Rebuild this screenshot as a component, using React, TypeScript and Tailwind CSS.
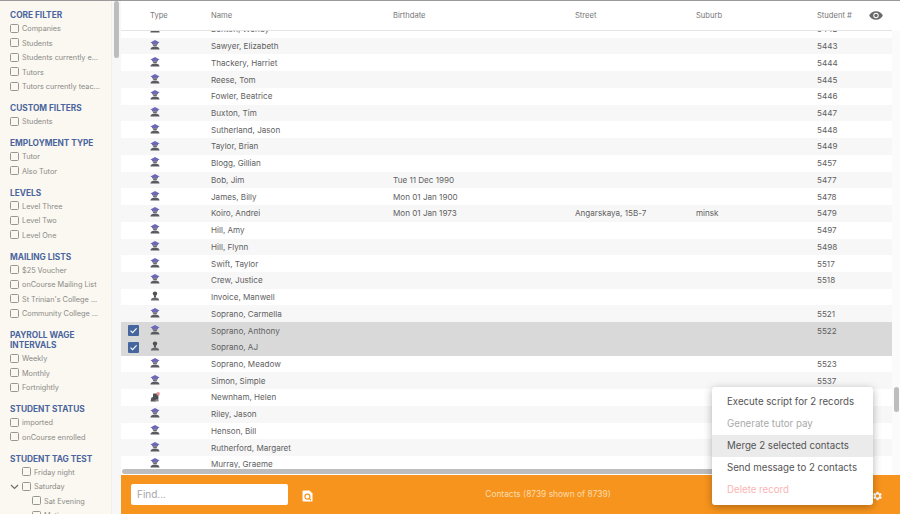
import React from "react";

type Group = { title: string[]; items: { label: string; indent?: number; chevron?: boolean }[] };

const groups: Group[] = [
  { title: ["CORE FILTER"], items: [{ label: "Companies" }, { label: "Students" }, { label: "Students currently e..." }, { label: "Tutors" }, { label: "Tutors currently teac..." }] },
  { title: ["CUSTOM FILTERS"], items: [{ label: "Students" }] },
  { title: ["EMPLOYMENT TYPE"], items: [{ label: "Tutor" }, { label: "Also Tutor" }] },
  { title: ["LEVELS"], items: [{ label: "Level Three" }, { label: "Level Two" }, { label: "Level One" }] },
  { title: ["MAILING LISTS"], items: [{ label: "$25 Voucher" }, { label: "onCourse Mailing List" }, { label: "St Trinian's College ..." }, { label: "Community College ..." }] },
  { title: ["PAYROLL WAGE", "INTERVALS"], items: [{ label: "Weekly" }, { label: "Monthly" }, { label: "Fortnightly" }] },
  { title: ["STUDENT STATUS"], items: [{ label: "imported" }, { label: "onCourse enrolled" }] },
  { title: ["STUDENT TAG TEST"], items: [{ label: "Friday night", indent: 1 }, { label: "Saturday", indent: 1, chevron: true }, { label: "Sat Evening", indent: 2 }, { label: "Matinee", indent: 2 }] },
];

type Row = { name: string; no?: string; birth?: string; street?: string; suburb?: string; kind?: "s" | "t" | "c"; sel?: boolean };
const rows: Row[] = [
  { name: "Benton, Wendy", no: "5442" },
  { name: "Sawyer, Elizabeth", no: "5443" },
  { name: "Thackery, Harriet", no: "5444" },
  { name: "Reese, Tom", no: "5445" },
  { name: "Fowler, Beatrice", no: "5446" },
  { name: "Buxton, Tim", no: "5447" },
  { name: "Sutherland, Jason", no: "5448" },
  { name: "Taylor, Brian", no: "5449" },
  { name: "Blogg, Gillian", no: "5457" },
  { name: "Bob, Jim", no: "5477", birth: "Tue 11 Dec 1990" },
  { name: "James, Billy", no: "5478", birth: "Mon 01 Jan 1900" },
  { name: "Koiro, Andrei", no: "5479", birth: "Mon 01 Jan 1973", street: "Angarskaya, 15B-7", suburb: "minsk" },
  { name: "Hill, Amy", no: "5497" },
  { name: "Hill, Flynn", no: "5498" },
  { name: "Swift, Taylor", no: "5517" },
  { name: "Crew, Justice", no: "5518" },
  { name: "Invoice, Manwell", kind: "t" },
  { name: "Soprano, Carmella", no: "5521" },
  { name: "Soprano, Anthony", no: "5522", sel: true },
  { name: "Soprano, AJ", kind: "t", sel: true },
  { name: "Soprano, Meadow", no: "5523" },
  { name: "Simon, Simple", no: "5537" },
  { name: "Newnham, Helen", kind: "c" },
  { name: "Riley, Jason" },
  { name: "Henson, Bill" },
  { name: "Rutherford, Margaret" },
  { name: "Murray, Graeme" },
];

function TypeIcon({ kind = "s" }: { kind?: "s" | "t" | "c" }) {
  if (kind === "c")
    return (
      <svg width="10" height="10" viewBox="0 0 10 10" className="block">
        <path d="M0.6 9.4 L1.2 6.2 Q1.6 5 3 5 L6 5 L6 9.4 Z" fill="#55565a" />
        <rect x="3" y="1.4" width="5.4" height="6.4" rx="0.6" fill="#4d4e53" />
        <rect x="6.6" y="0.3" width="3" height="3" rx="0.5" fill="#e58c93" />
        <rect x="4.6" y="7.8" width="4" height="1.6" fill="#85868a" />
      </svg>
    );
  if (kind === "t")
    return (
      <svg width="10" height="10" viewBox="0 0 10 10" className="block">
        <circle cx="5" cy="2.6" r="2.2" fill="#505155" />
        <rect x="4" y="4.2" width="2" height="2.4" fill="#505155" />
        <path d="M0.8 9.6 Q0.8 7.4 3 6.8 L7 6.8 Q9.2 7.4 9.2 9.6 Z" fill="#68696e" />
      </svg>
    );
  return (
    <svg width="10" height="10" viewBox="0 0 10 10" className="block">
      <path d="M5 0 L9.6 2.4 L8 3.2 L8 4.2 L2 4.2 L2 3.2 L0.4 2.4 Z" fill="#6d68b8" />
      <path d="M2.6 4.2 L7.4 4.2 Q7.2 6.4 5 6.4 Q2.8 6.4 2.6 4.2 Z" fill="#6a6b72" />
      <path d="M0.4 9.6 Q0.4 7.2 3 6.8 L7 6.8 Q9.6 7.2 9.6 9.6 Z" fill="#595a5f" />
    </svg>
  );
}

function Box() {
  return <span className="block w-[7px] h-[7px] box-content shrink-0 rounded-[1.5px] border border-[#97978f]" />;
}

function FilterItem({ label, indent = 0, chevron }: { label: string; indent?: number; chevron?: boolean }) {
  const pad = indent === 2 ? "pl-[32px]" : indent === 1 ? "pl-[22px]" : "pl-[10px]";
  return (
    <div className={`relative flex items-center h-[14.5px] ${pad} gap-[3px]`}>
      {chevron && (
        <svg width="9" height="6" viewBox="0 0 9 6" className="absolute left-[10px] top-[5px]">
          <path d="M1 1 L4.5 4.5 L8 1" fill="none" stroke="#6d6d6a" strokeWidth="1.2" />
        </svg>
      )}
      <Box />
      <span className="text-[7.3px] leading-[9px] pt-[1px] text-[#8a8a86] whitespace-nowrap">{label}</span>
    </div>
  );
}

function Sidebar() {
  return (
    <aside className="w-[111px] shrink-0 bg-[#fbf8f1] overflow-hidden pt-[4px]">
      {groups.map((g, i) => (
        <section key={i} className="pt-[5px] pb-[4.5px]">
          <h3 className="pl-[10px] mb-[1px] text-[8.3px] leading-[10px] font-bold text-[#4a659d] whitespace-nowrap">
            {g.title.map((t) => (
              <div key={t}>{t}</div>
            ))}
          </h3>
          {g.items.map((it) => (
            <FilterItem key={it.label} {...it} />
          ))}
        </section>
      ))}
    </aside>
  );
}

const cols = "grid grid-cols-[30px_60px_182px_182px_121px_121px_1fr] items-center";

function Table() {
  return (
    <div className="flex-1 min-h-0 flex flex-col bg-white">
      <div className={`${cols} h-[30px] shrink-0 border-b border-[#e3e3e3] text-[7.6px] text-[#777] pt-[1px] mr-[8px]`}>
        <span />
        <span className="-ml-[1px]">Type</span>
        <span>Name</span>
        <span>Birthdate</span>
        <span>Street</span>
        <span>Suburb</span>
        <span className="flex items-center justify-between pr-[9px]">
          Student #
          <svg width="14" height="9" viewBox="0 0 14 9">
            <path d="M7 0.2 C3.8 0.2 1.2 2 0.2 4.5 C1.2 7 3.8 8.8 7 8.8 C10.2 8.8 12.8 7 13.8 4.5 C12.8 2 10.2 0.2 7 0.2 Z" fill="#6a6a6a" />
            <circle cx="7" cy="4.5" r="2.7" fill="#fff" />
            <circle cx="7" cy="4.5" r="1.7" fill="#6a6a6a" />
          </svg>
        </span>
      </div>
      <div className="flex-1 min-h-0 flex">
        <div className="flex-1 min-w-0 overflow-hidden flex flex-col">
          <div className="flex-1 min-h-0 overflow-hidden">
            <div className="-mt-[10px]">
              {rows.map((r, i) => (
                <div
                  key={r.name}
                  className={`${cols} h-[16.74px] text-[8.1px] text-[#5f5f5f] ${r.sel ? "bg-[#d9d9d9]" : i % 2 === 1 ? "bg-[#f7f7f7]" : "bg-white"}`}
                >
                  <span className="pl-[7px]">
                    {r.sel && (
                      <span className="w-[11px] h-[11px] rounded-[1px] bg-[#45659e] flex items-center justify-center">
                        <svg width="9" height="9" viewBox="0 0 9 9">
                          <path d="M1.5 4.6 L3.6 6.7 L7.6 2.3" fill="none" stroke="#fff" strokeWidth="1.1" />
                        </svg>
                      </span>
                    )}
                  </span>
                  <span className="-mt-[2px] -ml-[1px]">
                    <TypeIcon kind={r.kind} />
                  </span>
                  <span>{r.name}</span>
                  <span>{r.birth}</span>
                  <span>{r.street}</span>
                  <span>{r.suburb}</span>
                  <span>{r.no}</span>
                </div>
              ))}
            </div>
          </div>
          <div className="h-[7px] shrink-0 bg-white flex items-center pl-[1px]">
            <div className="h-[5px] w-[650px] rounded-full bg-[#bdbdbd]" />
          </div>
        </div>
        <div className="w-[8px] shrink-0 bg-[#fbfbfb] pt-[356px] pl-[2px]">
          <div className="w-[5px] h-[25px] rounded-full bg-[#bdbdbd]" />
        </div>
      </div>
    </div>
  );
}

function Footer() {
  return (
    <footer className="h-[39px] shrink-0 bg-[#f7941d] flex items-center pl-[10px] pr-[17px]">
      <div className="w-[157px] h-[21px] rounded-[2px] bg-white flex items-center pl-[6px] text-[10px] text-[#a5a5a5]">Find...</div>
      <svg width="11" height="12" viewBox="0 0 11 12" className="ml-[14px] mt-[2px]">
        <path d="M1.5 0.5 L7.5 0.5 L10.5 3.5 L10.5 11.5 L1.5 11.5 Q0.5 11.5 0.5 10.5 L0.5 1.5 Q0.5 0.5 1.5 0.5 Z" fill="#fff" />
        <circle cx="5.4" cy="6.6" r="2.5" fill="none" stroke="#f7941d" strokeWidth="1.2" />
        <path d="M7.2 8.4 L9 10.2" stroke="#f7941d" strokeWidth="1.3" />
      </svg>
      <div className="flex-1 text-center text-[8.4px] text-[#fcdcb0] -ml-[88px]">Contacts (8739 shown of 8739)</div>
      <svg width="12" height="12" viewBox="0 0 24 24" fill="#fff" className="mt-[2px]">
        <path d="M19.4 13a7.7 7.7 0 0 0 0-2l2.1-1.6-2-3.5-2.5 1a7.6 7.6 0 0 0-1.7-1L15 3.3h-4l-.4 2.6a7.6 7.6 0 0 0-1.7 1l-2.5-1-2 3.5L6.6 11a7.7 7.7 0 0 0 0 2l-2.1 1.6 2 3.5 2.5-1a7.6 7.6 0 0 0 1.7 1l.4 2.6h4l.4-2.6a7.6 7.6 0 0 0 1.7-1l2.5 1 2-3.5zM13 15.5a3.5 3.5 0 1 1 0-7 3.5 3.5 0 0 1 0 7z" />
      </svg>
    </footer>
  );
}

function Menu() {
  const items: [string, string][] = [
    ["Execute script for 2 records", "text-[#555]"],
    ["Generate tutor pay", "text-[#aaa]"],
    ["Merge 2 selected contacts", "text-[#555] bg-[#ebebeb]"],
    ["Send message to 2 contacts", "text-[#555]"],
    ["Delete record", "text-[#fbb4b4]"],
  ];
  return (
    <div className="absolute left-[712px] top-[386px] w-[161px] h-[118px] rounded-[3px] bg-white py-[4px] shadow-[0_2px_8px_rgba(0,0,0,0.3)]">
      {items.map(([t, c]) => (
        <div key={t} className={`h-[22px] pl-[15px] flex items-center text-[9.7px] whitespace-nowrap ${c}`}>
          {t}
        </div>
      ))}
    </div>
  );
}

export default function App() {
  return (
    <div className="relative w-[900px] h-[514px] overflow-hidden flex flex-col bg-white border-t border-[#9a9a9a]" style={{ fontFamily: "Inter, 'Noto Sans', sans-serif" }}>
      <div className="flex-1 min-h-0 flex">
        <Sidebar />
        <div className="w-[10px] shrink-0 bg-[#f7f7f7] pl-[2px] border-l border-[#eee]">
          <div className="w-[5px] h-[57px] rounded-full bg-[#bdbdbd]" />
        </div>
        <div className="flex-1 min-w-0 flex flex-col">
          <Table />
          <Footer />
        </div>
      </div>
      <Menu />
    </div>
  );
}
